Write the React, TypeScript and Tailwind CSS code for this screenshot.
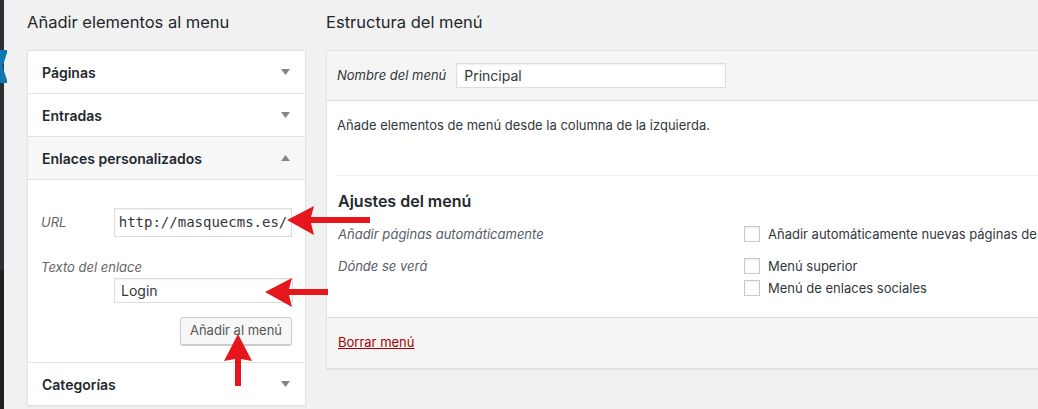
import type { ReactNode } from "react";

const font = { fontFamily: "Inter, 'Noto Sans', sans-serif" };

function Caret({ up = false }: { up?: boolean }) {
    return (
        <svg width="9" height="6" viewBox="0 0 9 6" className="text-[#82878c]">
            {up ? <polygon points="0,6 9,6 4.5,0" fill="currentColor" /> : <polygon points="0,0 9,0 4.5,6" fill="currentColor" />}
        </svg>
    );
}

function Row({ title, open = false }: { title: string; open?: boolean }) {
    return (
        <div
            className={
                "flex h-[43px] items-center justify-between border-b border-[#e2e2e2] pl-[14px] pr-[15px] " +
                (open ? "bg-[#f7f7f7]" : "bg-white")
            }
        >
            <span className="text-[14px] font-semibold text-[#23282d]">{title}</span>
            <Caret up={open} />
        </div>
    );
}

function Check({ children }: { children: ReactNode }) {
    return (
        <label className="flex shrink-0 items-center gap-[8px] text-[13px] leading-[16px] text-[#32373c]">
            <span className="h-[16px] w-[16px] shrink-0 border border-[#c8c8c8] bg-white shadow-[inset_0_1px_2px_rgba(0,0,0,0.07)]" />
            <span className="whitespace-nowrap">{children}</span>
        </label>
    );
}

function ArrowLeft({ tipX, y, tailX }: { tipX: number; y: number; tailX: number }) {
    const w = tailX - tipX;
    return (
        <svg
            className="pointer-events-none absolute"
            style={{ left: tipX, top: y - 20 }}
            width={w}
            height="40"
            viewBox={`0 0 ${w} 40`}
        >
            <polygon points={`0,20 27,6 24,17 ${w},17 ${w},23 24,23 27,35`} fill="#e5171c" />
        </svg>
    );
}

export default function App() {
    return (
        <div className="relative flex h-[409px] w-[1038px] overflow-hidden bg-[#f1f1f1]" style={font}>
            {/* admin sidebar edge */}
            <div className="flex w-[4px] shrink-0 flex-col">
                <div className="h-[270px] bg-[#2c3035]" />
                <div className="flex-1 bg-[#1f2225]" />
            </div>
            <svg className="absolute left-0 top-[50px]" width="8" height="33" viewBox="0 0 8 33">
                <polygon points="0,0 7,0 7,3 2.5,16.5 7,30 7,33 0,33" fill="#0d76b3" />
            </svg>

            {/* left column */}
            <div className="ml-[23px] w-[279px] shrink-0">
                <h2 className="pt-[11px] text-[16.5px] leading-[23px] text-[#23282d]">Añadir elementos al menu</h2>
                <div className="mt-[16px] border border-b-0 border-[#e2e2e2] bg-white shadow-[0_1px_1px_rgba(0,0,0,0.04)]">
                    <Row title="Páginas" />
                    <Row title="Entradas" />
                    <Row title="Enlaces personalizados" open />
                    <div className="border-b border-[#e2e2e2] pb-[17px] pl-[13px] pr-[13px] pt-[28px]">
                        <div className="flex items-center">
                            <span className="w-[73px] text-[13px] italic text-[#666]">URL</span>
                            <div className="flex h-[29px] w-[179px] items-center overflow-hidden border border-[#ddd] bg-white pl-[4px] text-[14px] text-[#32373c] shadow-[inset_0_1px_2px_rgba(0,0,0,0.07)]"
                                style={{ fontFamily: "'DejaVu Sans Mono', monospace" }}>
                                http://masquecms.es/
                            </div>
                        </div>
                        <div className="mt-[21px] text-[13px] italic leading-[18px] text-[#666]">Texto del enlace</div>
                        <div className="ml-[73px] mt-[2px] flex h-[25px] w-[179px] items-center border border-[#ddd] bg-white pl-[6px] text-[14px] text-[#32373c] shadow-[inset_0_1px_2px_rgba(0,0,0,0.07)]">
                            Login
                        </div>
                        <div className="mt-[14px] flex justify-end">
                            <button className="h-[28px] w-[112px] rounded-[3px] border border-[#ccc] bg-[#f7f7f7] text-[13px] text-[#555] shadow-[0_1px_0_#ccc]">
                                Añadir al menú
                            </button>
                        </div>
                    </div>
                    <Row title="Categorías" />
                </div>
            </div>

            {/* right column */}
            <div className="ml-[20px] w-[800px] shrink-0">
                <h2 className="pt-[11px] text-[16.5px] leading-[23px] text-[#23282d]">Estructura del menú</h2>
                <div className="mt-[16px] border border-[#e2e2e2] bg-white shadow-[0_1px_1px_rgba(0,0,0,0.06)]">
                    <div className="flex h-[50px] items-center gap-[10px] border-b border-[#dcdcdc] bg-[#f5f5f5] px-[10px]">
                        <span className="text-[13px] italic text-[#32373c]">Nombre del menú</span>
                        <div className="flex h-[25px] w-[270px] items-center border border-[#ddd] bg-white pl-[7px] text-[14px] text-[#32373c] shadow-[inset_0_1px_2px_rgba(0,0,0,0.07)]">
                            Principal
                        </div>
                    </div>
                    <div className="px-[10px]">
                        <p className="pt-[15px] text-[13px] leading-[19px] text-[#32373c]">
                            Añade elementos de menú desde la columna de la izquierda.
                        </p>
                        <div className="mt-[40px] border-t border-[#eee]" />
                        <h3 className="pl-[1px] pt-[14px] text-[16px] font-semibold leading-[22px] text-[#23282d]">Ajustes del menú</h3>
                        <div className="mt-[14px] flex items-center">
                            <span className="w-[407px] shrink-0 pl-[1px] text-[13px] italic leading-[16px] text-[#555d66]">Añadir páginas automáticamente</span>
                            <Check>Añadir automáticamente nuevas páginas de nivel superior a este menú</Check>
                        </div>
                        <div className="mt-[16px] flex items-start pb-[21px]">
                            <span className="w-[407px] shrink-0 pl-[1px] text-[13px] italic leading-[16px] text-[#555d66]">Dónde se verá</span>
                            <div className="flex flex-col gap-[6px]">
                                <Check>Menú superior</Check>
                                <Check>Menú de enlaces sociales</Check>
                            </div>
                        </div>
                    </div>
                    <div className="flex h-[51px] items-center border-t border-[#dcdcdc] bg-[#f5f5f5] px-[11px]">
                        <a className="text-[13px] text-[#a00] underline">Borrar menú</a>
                    </div>
                </div>
            </div>

            {/* red annotation arrows */}
            <ArrowLeft tipX={287} y={220} tailX={370} />
            <ArrowLeft tipX={265} y={292} tailX={328} />
            <svg className="pointer-events-none absolute left-[222px] top-[334px]" width="32" height="52" viewBox="0 0 32 52">
                <polygon points="16,0 30,27 19,25 19,52 13,52 13,25 2,27" fill="#e5171c" />
            </svg>
        </div>
    );
}
